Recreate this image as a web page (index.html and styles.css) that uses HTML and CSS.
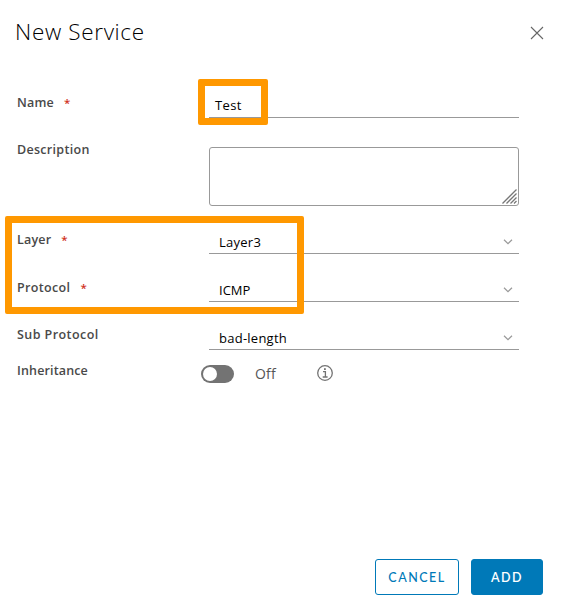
FILE: index.html
```html
<!DOCTYPE html>
<html lang="en">
<head>
<meta charset="utf-8">
<title>New Service</title>
<link rel="stylesheet" href="styles.css">
</head>
<body>
<main class="modal">
  <header class="modal-header">
    <h1 class="title">New Service</h1>
    <svg class="close" viewBox="0 0 14 14" width="14" height="14"><path d="M1 1 13 13M13 1 1 13"/></svg>
  </header>
  <form class="form">
    <div class="row row-name">
      <label class="label"><span class="t-name">Name</span><span class="req">*</span></label>
      <div class="field field-text"><span class="v-test">Test</span></div>
    </div>
    <div class="row row-desc">
      <label class="label"><span class="t-desc">Description</span></label>
      <div class="area">
        <svg class="grip" viewBox="0 0 15 15" width="15" height="15"><path d="M0.5 14.5 14.5 0.5M4.5 14.5 14.5 4.5M8.5 14.5 14.5 8.5M12 14.5 14.5 12"/></svg>
      </div>
    </div>
    <div class="row row-layer">
      <label class="label"><span class="t-layer">Layer</span><span class="req">*</span></label>
      <div class="field"><span class="v-layer">Layer3</span><svg class="chev" viewBox="0 0 10 6" width="10" height="6"><path d="M1 .8 5 4.6 9 .8"/></svg></div>
    </div>
    <div class="row row-protocol">
      <label class="label"><span class="t-protocol">Protocol</span><span class="req">*</span></label>
      <div class="field"><span class="v-icmp">ICMP</span><svg class="chev" viewBox="0 0 10 6" width="10" height="6"><path d="M1 .8 5 4.6 9 .8"/></svg></div>
    </div>
    <div class="row row-sub">
      <label class="label"><span class="t-sub">Sub Protocol</span></label>
      <div class="field"><span class="v-bad">bad-length</span><svg class="chev" viewBox="0 0 10 6" width="10" height="6"><path d="M1 .8 5 4.6 9 .8"/></svg></div>
    </div>
    <div class="row row-inherit">
      <label class="label"><span class="t-inherit">Inheritance</span></label>
      <div class="switch">
        <span class="track"><span class="knob"></span></span>
        <span class="off">Off</span>
        <svg class="info" viewBox="0 0 16 16" width="16" height="16"><circle cx="8" cy="8" r="7.3"/><path d="M6 6.7H8.4V12M5.7 12H10.6"/><rect x="7" y="3.2" width="1.8" height="1.8"/></svg>
      </div>
    </div>
  </form>
  <footer class="actions">
    <button class="btn cancel" type="button">CANCEL</button>
    <button class="btn add" type="button">ADD</button>
  </footer>
  <div class="mark mark-name"></div>
  <div class="mark mark-layer"></div>
</main>
</body>
</html>
```

FILE: styles.css
```css
* { box-sizing: border-box; }
body { margin: 0; background: #fff; font-family: "Open Sans", "Noto Sans", sans-serif; color: #000; }
.modal { position: relative; width: 562px; height: 613px; display: flex; flex-direction: column; overflow: hidden; }
.modal-header { display: flex; justify-content: space-between; align-items: flex-start; height: 93px; padding: 18px 18px 0 15px; }
.title { margin: 0; font-size: 22.5px; line-height: 28px; font-weight: 330; letter-spacing: 0.65px; white-space: nowrap; }
.close { margin-top: 8px; stroke: #666; stroke-width: 1.1; fill: none; }
.form { flex: 1; padding-left: 17px; }
.row { display: grid; grid-template-columns: 192px 310px; align-items: start; }
.row-name { height: 47px; }
.row-desc { height: 89px; }
.row-layer { height: 48px; }
.row-protocol { height: 48px; }
.row-sub { height: 36px; }
.row-layer .label, .row-protocol .label { padding-top: 1px; }
.label { display: flex; gap: 10px; font-size: 12.5px; line-height: 20px; font-weight: 650; letter-spacing: 0.2px; color: #494949; white-space: nowrap; }
.t-desc { letter-spacing: 0.3px; }
.t-protocol { letter-spacing: 0.35px; }
.t-sub { letter-spacing: 0.43px; }
.t-inherit { letter-spacing: 0.15px; }
.req { color: #d0301c; font-weight: 600; font-size: 11.5px; }
.field { display: flex; justify-content: space-between; align-items: center; height: 25px; padding: 2px 6px 0 10px; border-bottom: 1px solid #999; font-size: 13px; line-height: 20px; letter-spacing: 0.25px; white-space: nowrap; }
.field-text { padding: 0 0 0 6px; letter-spacing: 0.4px; }
.v-icmp { letter-spacing: 0; }
.chev { fill: none; stroke: #999; stroke-width: 1.2; }
.area { display: flex; justify-content: flex-end; align-items: flex-end; margin-top: 7px; height: 59px; padding: 0 1px 1px 0; border: 1px solid #999; border-radius: 3px; }
.grip { stroke: #777; stroke-width: 1.3; fill: none; }
.switch { display: flex; align-items: center; height: 26px; margin-left: -8px; }
.track { display: flex; width: 33px; height: 18px; padding: 2px; border-radius: 9px; background: #737373; }
.knob { width: 14px; height: 14px; border-radius: 50%; background: #fff; }
.off { width: 62px; margin-left: 21px; font-size: 14px; line-height: 20px; font-weight: 400; letter-spacing: 0.2px; color: #565656; }
.info { margin-top: -2px; fill: none; stroke: #737373; stroke-width: 1.3; }
.info rect { fill: #737373; stroke: none; }
.actions { display: flex; justify-content: flex-end; gap: 12px; height: 54px; padding-right: 19px; }
.btn { height: 36px; padding: 1px 0 0; border: 1px solid #0079b8; border-radius: 3px; font: 500 12.5px/33px Lato, sans-serif; letter-spacing: 1.5px; }
.cancel { width: 84px; background: #fff; color: #0079b8; }
.add { width: 72px; background: #0079b8; color: #fff; font-weight: 600; }
.mark { position: absolute; border: 7px solid #ff9800; border-radius: 2px; }
.mark-name { left: 198px; top: 79px; width: 70px; height: 46px; }
.mark-layer { left: 5px; top: 216px; width: 299px; height: 98px; }
```
